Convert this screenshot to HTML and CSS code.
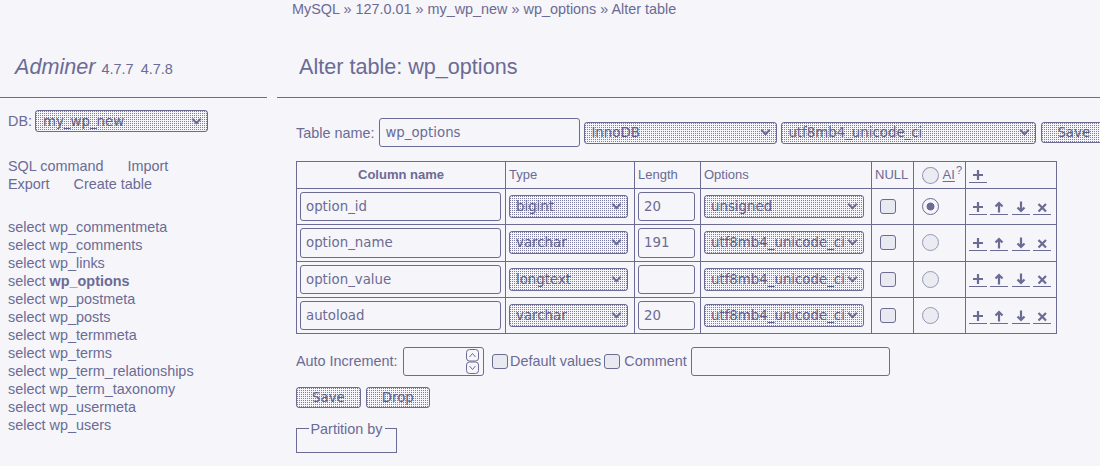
FILE: index.html
```html
<!DOCTYPE html>
<html lang="en">
<head>
<meta charset="utf-8">
<title>Alter table: wp_options - Adminer</title>
<link rel="stylesheet" href="styles.css">
</head>
<body>
<div class="page">
  <aside class="menu">
    <h1 class="logo"><a href="#" class="brand">Adminer</a> <span class="version">4.7.7</span> <a href="#" class="version newver">4.7.8</a></h1>
    <form class="dbform">
      <label class="dblabel">DB:</label>
      <span class="sel sel-db"><select class="dither"><option>my_wp_new</option></select></span>
    </form>
    <div class="links">
      <div><a href="#">SQL command</a> <a href="#">Import</a></div>
      <div><a href="#">Export</a> <a href="#">Create table</a></div>
    </div>
    <ul class="tables">
      <li><a href="#">select</a> <a href="#">wp_commentmeta</a></li>
      <li><a href="#">select</a> <a href="#">wp_comments</a></li>
      <li><a href="#">select</a> <a href="#">wp_links</a></li>
      <li><a href="#">select</a> <a href="#" class="active">wp_options</a></li>
      <li><a href="#">select</a> <a href="#">wp_postmeta</a></li>
      <li><a href="#">select</a> <a href="#">wp_posts</a></li>
      <li><a href="#">select</a> <a href="#">wp_termmeta</a></li>
      <li><a href="#">select</a> <a href="#">wp_terms</a></li>
      <li><a href="#">select</a> <a href="#">wp_term_relationships</a></li>
      <li><a href="#">select</a> <a href="#">wp_term_taxonomy</a></li>
      <li><a href="#">select</a> <a href="#">wp_usermeta</a></li>
      <li><a href="#">select</a> <a href="#">wp_users</a></li>
    </ul>
  </aside>

  <main class="content">
    <p class="breadcrumb"><a href="#">MySQL</a> » <a href="#">127.0.01</a> » <a href="#">my_wp_new</a> » <a href="#">wp_options</a> » Alter table</p>
    <h2 class="title">Alter table: wp_options</h2>

    <form class="form">
      <div class="row tablename">
        <span class="lbl">Table name:</span>
        <input class="txt tn" value="wp_options">
        <span class="sel sel-engine"><select class="dither"><option>InnoDB</option></select></span>
        <span class="sel sel-coll"><select class="dither"><option>utf8mb4_unicode_ci</option></select></span>
        <button type="button" class="btn dither save-top">Save</button>
      </div>

      <table class="fields">
        <thead>
          <tr>
            <th class="c-name">Column name</th>
            <td class="c-type">Type</td>
            <td class="c-len">Length</td>
            <td class="c-opt">Options</td>
            <td class="c-null">NULL</td>
            <td class="c-ai"><div class="ai"><input type="radio" name="ai" class="radio"><abbr title="Auto Increment">AI</abbr><sup>?</sup></div></td>
            <td class="c-act"><div class="acts"><span class="ico"><svg width="18" height="15" viewBox="0 0 18 15"><path d="M4 8h10M9 3v10" /></svg></span></div></td>
          </tr>
        </thead>
        <tbody>
          <tr>
            <td><input class="txt name" value="option_id"></td>
            <td><span class="sel sel-type"><select class="dither"><option>bigint</option></select></span></td>
            <td><input class="txt len" value="20"></td>
            <td><span class="sel sel-opt"><select class="dither"><option>unsigned</option></select></span></td>
            <td><input type="checkbox" class="chk cell-chk"></td>
            <td><input type="radio" name="ai" class="radio cell-radio" checked></td>
            <td><div class="acts">
              <span class="ico"><svg width="18" height="15" viewBox="0 0 18 15"><path d="M4 8h10M9 3v10" /></svg></span>
              <span class="ico"><svg width="18" height="15" viewBox="0 0 18 15"><path d="M9 4v9.5M5.5 7.5L9 4l3.5 3.5" /></svg></span>
              <span class="ico"><svg width="18" height="15" viewBox="0 0 18 15"><path d="M9 2.5V12M5.5 8.5L9 12l3.5-3.5" /></svg></span>
              <span class="ico"><svg width="18" height="15" viewBox="0 0 18 15"><path d="M5.5 5l7.5 7.5M13 5l-7.5 7.5" /></svg></span>
            </div></td>
          </tr>
          <tr>
            <td><input class="txt name" value="option_name"></td>
            <td><span class="sel sel-type"><select class="dither"><option>varchar</option></select></span></td>
            <td><input class="txt len" value="191"></td>
            <td><span class="sel sel-opt"><select class="dither"><option>utf8mb4_unicode_ci</option></select></span></td>
            <td><input type="checkbox" class="chk cell-chk"></td>
            <td><input type="radio" name="ai" class="radio cell-radio"></td>
            <td><div class="acts">
              <span class="ico"><svg width="18" height="15" viewBox="0 0 18 15"><path d="M4 8h10M9 3v10" /></svg></span>
              <span class="ico"><svg width="18" height="15" viewBox="0 0 18 15"><path d="M9 4v9.5M5.5 7.5L9 4l3.5 3.5" /></svg></span>
              <span class="ico"><svg width="18" height="15" viewBox="0 0 18 15"><path d="M9 2.5V12M5.5 8.5L9 12l3.5-3.5" /></svg></span>
              <span class="ico"><svg width="18" height="15" viewBox="0 0 18 15"><path d="M5.5 5l7.5 7.5M13 5l-7.5 7.5" /></svg></span>
            </div></td>
          </tr>
          <tr>
            <td><input class="txt name" value="option_value"></td>
            <td><span class="sel sel-type"><select class="dither"><option>longtext</option></select></span></td>
            <td><input class="txt len" value=""></td>
            <td><span class="sel sel-opt"><select class="dither"><option>utf8mb4_unicode_ci</option></select></span></td>
            <td><input type="checkbox" class="chk cell-chk"></td>
            <td><input type="radio" name="ai" class="radio cell-radio"></td>
            <td><div class="acts">
              <span class="ico"><svg width="18" height="15" viewBox="0 0 18 15"><path d="M4 8h10M9 3v10" /></svg></span>
              <span class="ico"><svg width="18" height="15" viewBox="0 0 18 15"><path d="M9 4v9.5M5.5 7.5L9 4l3.5 3.5" /></svg></span>
              <span class="ico"><svg width="18" height="15" viewBox="0 0 18 15"><path d="M9 2.5V12M5.5 8.5L9 12l3.5-3.5" /></svg></span>
              <span class="ico"><svg width="18" height="15" viewBox="0 0 18 15"><path d="M5.5 5l7.5 7.5M13 5l-7.5 7.5" /></svg></span>
            </div></td>
          </tr>
          <tr>
            <td><input class="txt name" value="autoload"></td>
            <td><span class="sel sel-type"><select class="dither"><option>varchar</option></select></span></td>
            <td><input class="txt len" value="20"></td>
            <td><span class="sel sel-opt"><select class="dither"><option>utf8mb4_unicode_ci</option></select></span></td>
            <td><input type="checkbox" class="chk cell-chk"></td>
            <td><input type="radio" name="ai" class="radio cell-radio"></td>
            <td><div class="acts">
              <span class="ico"><svg width="18" height="15" viewBox="0 0 18 15"><path d="M4 8h10M9 3v10" /></svg></span>
              <span class="ico"><svg width="18" height="15" viewBox="0 0 18 15"><path d="M9 4v9.5M5.5 7.5L9 4l3.5 3.5" /></svg></span>
              <span class="ico"><svg width="18" height="15" viewBox="0 0 18 15"><path d="M9 2.5V12M5.5 8.5L9 12l3.5-3.5" /></svg></span>
              <span class="ico"><svg width="18" height="15" viewBox="0 0 18 15"><path d="M5.5 5l7.5 7.5M13 5l-7.5 7.5" /></svg></span>
            </div></td>
          </tr>
        </tbody>
      </table>

      <div class="row extras">
        <span class="lbl">Auto Increment:</span>
        <span class="num">
          <input class="numin" value="">
          <svg class="spin" width="13" height="25" viewBox="0 0 13 25"><rect x="0.5" y="0.5" width="12" height="11.5" rx="3"/><rect x="0.5" y="13" width="12" height="11.5" rx="3"/><path d="M3.5 8L6.5 4.5 9.5 8M3.5 17l3 3.5 3-3.5"/></svg>
        </span>
        <input type="checkbox" class="chk chk-def"><span class="lbl lbl-def">Default values</span>
        <input type="checkbox" class="chk chk-com"><span class="lbl lbl-com">Comment</span>
        <input class="txt comment" value="">
      </div>

      <div class="row buttons">
        <button type="button" class="btn dither">Save</button>
        <button type="button" class="btn dither">Drop</button>
      </div>

      <fieldset class="partition"><legend>Partition by</legend></fieldset>
    </form>
  </main>
</div>
</body>
</html>
```

FILE: styles.css
```css
html { overflow: hidden; }
body {
  margin: 0;
  background: #f5f5fa;
  color: #6b6b94;
  font: 14.4px/18px "Liberation Sans", Arial, sans-serif;
}
a { color: inherit; text-decoration: none; }

.page { display: flex; align-items: flex-start; }

/* ---------- menu ---------- */
.menu { width: 267px; flex-shrink: 0; padding-top: 36px; }
.logo {
  margin: 0;
  padding: 17px 13px 17px 15px;
  height: 27px;
  font-size: 21.6px;
  line-height: 27px;
  font-weight: normal;
  border-bottom: 1px solid #6b6b94;
  white-space: nowrap;
}
.brand { font-style: italic; }
.version { font-size: 14.5px; line-height: 1; }
.newver { margin-left: 1px; }

.dbform {
  display: flex;
  align-items: center;
  gap: 3px;
  margin: 12px 0 0;
  padding-left: 8px;
}
.links { margin-top: 25px; padding-left: 8px; }
.links a { margin-right: 20px; }
.tables { list-style: none; margin: 24.5px 0 0; padding: 0 0 0 8px; }
.tables .active { font-weight: bold; }

/* ---------- content ---------- */
.content { flex: 1; min-width: 0; margin-left: 10px; }
.breadcrumb { margin: 0; padding-left: 15px; white-space: nowrap; }
.title {
  margin: 18px 0 0;
  padding: 17px 22px;
  font-size: 21.6px;
  line-height: 27px;
  font-weight: normal;
  border-bottom: 1px solid #6b6b94;
}
.form { padding-left: 19px; }
.row { display: flex; align-items: center; white-space: nowrap; }
.row > * { flex-shrink: 0; }

.dither {
  background-color: #f5f5fa;
  background-image: conic-gradient(at 1px 1px, transparent 0 75%, #7d7ca2 0);
  background-size: 2px 2px;
}

/* controls */
.txt {
  box-sizing: border-box;
  height: 29px;
  margin: 0;
  padding: 0 5px;
  border: 1px solid #6b6b94;
  border-radius: 3px;
  background: transparent;
  color: #6b6b94;
  font: 13.33px "DejaVu Sans", sans-serif;
  outline: none;
}

.sel { position: relative; display: inline-block; }
.sel select {
  display: block;
  box-sizing: border-box;
  width: 100%;
  height: 22px;
  margin: 0;
  padding: 0 14px 0 6px;
  border: 1px solid #6b6b94;
  border-radius: 3px;
  color: #5f5e88;
  font: 13.33px "DejaVu Sans", sans-serif;
  appearance: none;
  -webkit-appearance: none;
  outline: none;
}
.sel::after {
  content: "";
  position: absolute;
  right: 8px;
  top: 50%;
  width: 5px;
  height: 5px;
  margin-top: -5.5px;
  border-right: 2px solid #6b6b94;
  border-bottom: 2px solid #6b6b94;
  transform: rotate(45deg);
  pointer-events: none;
}
.sel-db { width: 173px; }
.sel-db select { padding-left: 7px; }
.sel-engine { width: 193px; margin-left: 4px; }
.sel-coll { width: 255px; margin-left: 4px; }
.sel-type { display: block; width: 119px; }
.sel-type select, .sel-opt select { height: 23px; }
.sel-opt { display: block; width: 160px; }
.sel-opt select { padding-right: 12px; }

.btn {
  box-sizing: border-box;
  height: 21px;
  margin: 0;
  padding: 0 15px;
  border: 1px solid #6b6b94;
  border-radius: 3px;
  color: #5f5e88;
  font: 13.33px/19px "DejaVu Sans", sans-serif;
}

.chk {
  appearance: none;
  -webkit-appearance: none;
  box-sizing: border-box;
  width: 16px;
  height: 15px;
  margin: 0;
  border: 1px solid #6b6b94;
  border-radius: 3px;
  background: #e9e9f1;
}
.radio {
  appearance: none;
  -webkit-appearance: none;
  box-sizing: border-box;
  width: 17px;
  height: 17px;
  margin: 0;
  border: 1px solid #9897b6;
  border-radius: 50%;
  background: #ebebf2;
}
.radio:checked {
  border-color: #6b6b94;
  background: radial-gradient(circle, #6b6b94 0 3.6px, #f5f5fa 4.3px);
}

/* table name row */
.tablename { margin-top: 20px; }
.lbl { display: block; }
.tablename .lbl { margin-right: 5px; }
.tn { width: 201px; }
.save-top { margin-left: 5px; }

/* fields table */
.fields {
  margin-top: 14px;
  width: 761px;
  table-layout: fixed;
  border-collapse: separate;
  border-spacing: 0;
  border-top: 1px solid #6b6b94;
  border-left: 1px solid #6b6b94;
}
.fields th, .fields td {
  box-sizing: border-box;
  padding: 3px;
  border-right: 1px solid #6b6b94;
  border-bottom: 1px solid #6b6b94;
  font-size: 13px;
  text-align: left;
  vertical-align: middle;
}
.fields thead th, .fields thead td { padding: 0 3px; line-height: 26px; }
.fields thead th { text-align: center; font-weight: bold; }
.c-name { width: 209px; }
.c-type { width: 129px; }
.c-len { width: 66px; }
.c-opt { width: 171px; }
.c-null { width: 42px; }
.c-ai { width: 52px; }
.c-act { width: 91px; }

.name { display: block; width: 201px; height: 29.33px; }
.len { display: block; width: 57px; height: 29.33px; }
.cell-chk { display: block; margin-left: 5px; }
.cell-radio { display: block; margin-left: 5px; }

.ai { display: flex; align-items: center; line-height: 16px; }
.ai .radio { margin-left: 5px; }
.ai abbr {
  margin-left: 4px;
  text-decoration: underline;
  text-underline-offset: 2px;
}
.ai sup { font-size: 11px; line-height: 10px; align-self: flex-start; margin: -2px 0 0 1px; }

.acts { display: flex; gap: 3.3px; }
.ico { display: block; width: 18px; height: 15px; border-bottom: 1px solid #6b6b94; }
.ico svg { display: block; fill: none; stroke: #6b6b94; stroke-width: 2.2; }

/* extras row */
.extras { margin-top: 12.4px; }
.num {
  box-sizing: border-box;
  display: flex;
  align-items: center;
  width: 81px;
  height: 29px;
  margin-left: 5px;
  padding-right: 4px;
  border: 1px solid #6b6b94;
  border-radius: 3px;
}
.numin {
  flex: 1;
  min-width: 0;
  height: 100%;
  padding: 0;
  border: 0;
  background: transparent;
  outline: none;
}
.spin { display: block; fill: none; stroke: #6b6b94; stroke-width: 1; }
.chk-def { margin-left: 8px; }
.lbl-def { margin-left: 2.5px; }
.chk-com { margin-left: 3px; }
.lbl-com { margin-left: 4px; }
.comment { width: 199px; margin-left: 4px; }

/* buttons */
.buttons { margin-top: 11px; gap: 5px; }

/* partition */
.partition {
  width: fit-content;
  min-inline-size: 0;
  margin: 12px 0 0;
  padding: 7.2px 11.5px;
  border: 1px solid #6b6b94;
}
.partition legend { padding: 0 2px; line-height: 18px; }
```
